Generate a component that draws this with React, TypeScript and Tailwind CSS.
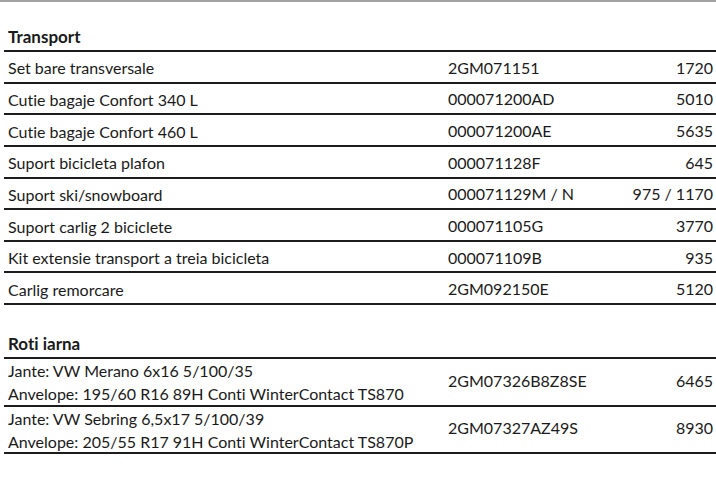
import React from 'react';

type Row = { name: string[]; code: string; price: string };

const transport: Row[] = [
  { name: ['Set bare transversale'], code: '2GM071151', price: '1720' },
  { name: ['Cutie bagaje Confort 340 L'], code: '000071200AD', price: '5010' },
  { name: ['Cutie bagaje Confort 460 L'], code: '000071200AE', price: '5635' },
  { name: ['Suport bicicleta plafon'], code: '000071128F', price: '645' },
  { name: ['Suport ski/snowboard'], code: '000071129M / N', price: '975 / 1170' },
  { name: ['Suport carlig 2 biciclete'], code: '000071105G', price: '3770' },
  { name: ['Kit extensie transport a treia bicicleta'], code: '000071109B', price: '935' },
  { name: ['Carlig remorcare'], code: '2GM092150E', price: '5120' },
];

const roti: Row[] = [
  {
    name: ['Jante: VW Merano 6x16 5/100/35', 'Anvelope: 195/60 R16 89H Conti WinterContact TS870'],
    code: '2GM07326B8Z8SE',
    price: '6465',
  },
  {
    name: ['Jante: VW Sebring 6,5x17 5/100/39', 'Anvelope: 205/55 R17 91H Conti WinterContact TS870P'],
    code: '2GM07327AZ49S',
    price: '8930',
  },
];

function TableRow({ row, tall }: { row: Row; tall?: boolean }) {
  return (
    <div
      className={
        'grid grid-cols-[440px_1fr_auto] items-center border-b-2 border-[#1c1c1c] pl-1 pr-[3px] ' +
        (tall ? 'h-[47.5px]' : 'h-[31.65px] pt-[2px]')
      }
    >
      <div className="flex flex-col leading-[23px]">
        {row.name.map((n) => (
          <span key={n} className="whitespace-nowrap">{n}</span>
        ))}
      </div>
      <div className={tall ? 'pb-[3px]' : ''}>{row.code}</div>
      <div className={'text-right ' + (tall ? 'pb-[3px]' : '')}>{row.price}</div>
    </div>
  );
}

export default function App() {
  return (
    <div
      className="w-[716px] h-[477px] overflow-hidden bg-white text-[#1a1a1a] text-[16px] border-t-2 border-[#a3a3a3] [font-variant-ligatures:none]"
      style={{ fontFamily: 'Lato, "Open Sans", sans-serif' }}
    >
      <div className="ml-1">
        <div className="h-[50px] flex items-end pb-[1px] pl-1 font-bold text-[17px] border-b-2 border-[#1c1c1c]">
          Transport
        </div>
        {transport.map((r) => (
          <TableRow key={r.name[0]} row={r} />
        ))}
        <div className="h-[54px] flex items-end pb-[1px] pl-1 font-bold text-[17px] border-b-2 border-[#1c1c1c]">
          Roti iarna
        </div>
        {roti.map((r) => (
          <TableRow key={r.name[0]} row={r} tall />
        ))}
      </div>
    </div>
  );
}
